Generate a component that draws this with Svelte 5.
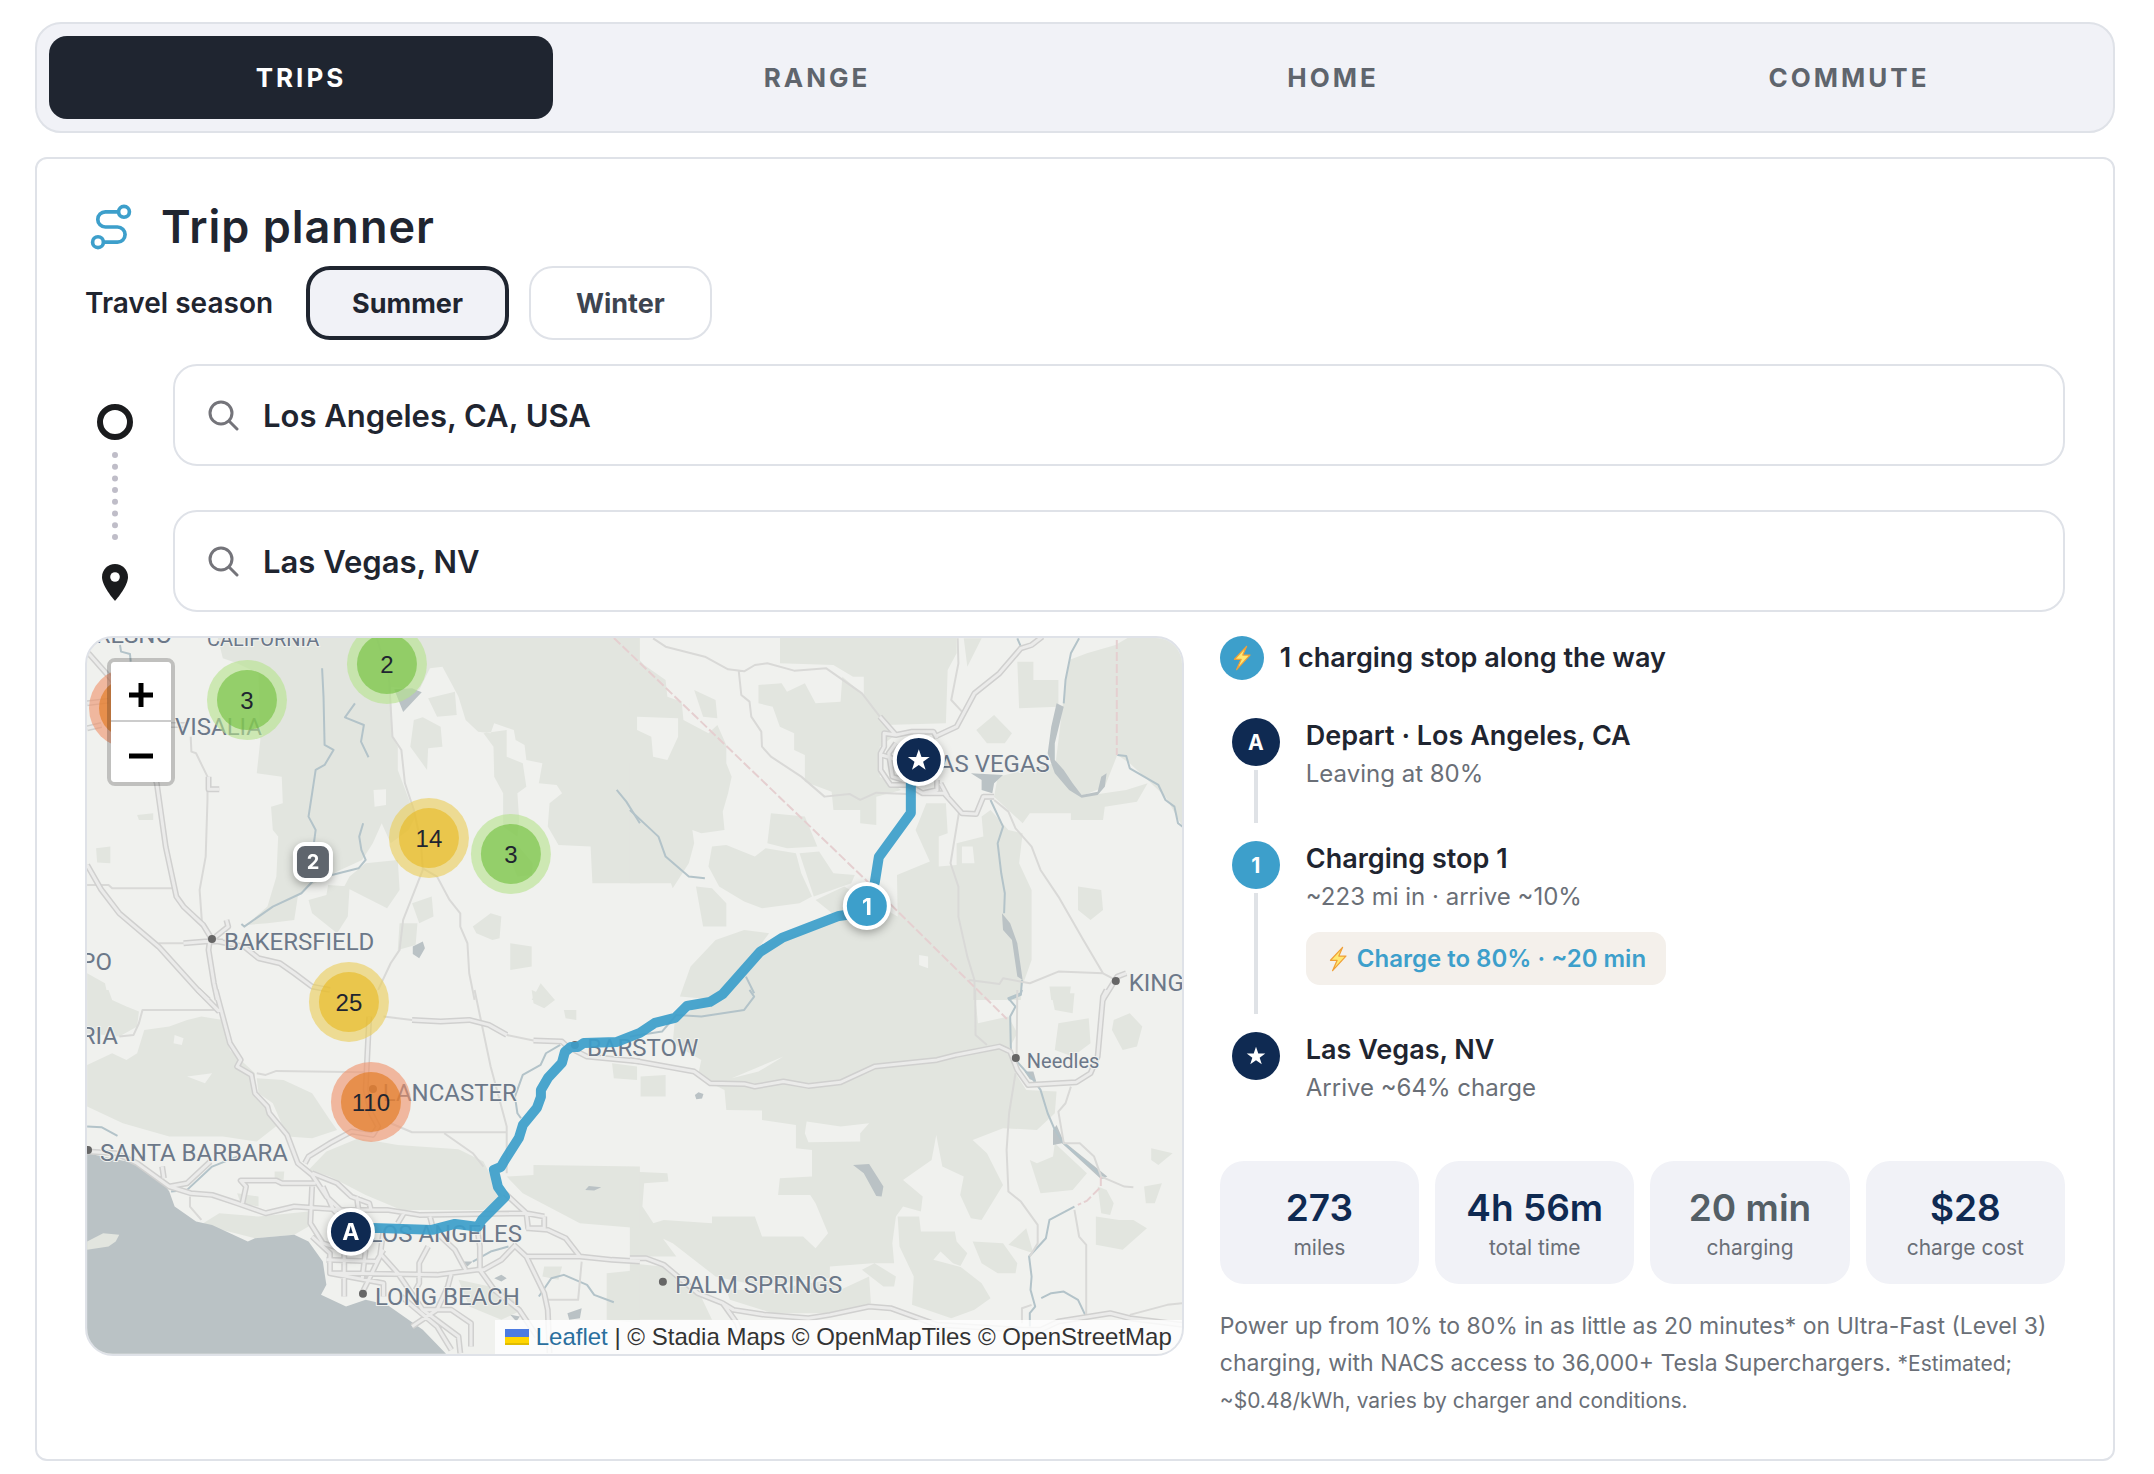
<script>
  const tabs = ['TRIPS', 'RANGE', 'HOME', 'COMMUTE'];
  const seasons = ['Summer', 'Winter'];
  let tab = $state('TRIPS');
  let season = $state('Summer');
  let origin = $state('Los Angeles, CA, USA');
  let destination = $state('Las Vegas, NV');

  const stats = [
    { value: '273', label: 'miles' },
    { value: '4h 56m', label: 'total time' },
    { value: '20 min', label: 'charging', muted: true },
    { value: '$28', label: 'charge cost' }
  ];

  const clusters = [
    { x: 129, y: 708, n: '', size: 'large' },
    { x: 247, y: 700, n: '3', size: 'small' },
    { x: 387, y: 664, n: '2', size: 'small' },
    { x: 429, y: 838, n: '14', size: 'medium' },
    { x: 511, y: 854, n: '3', size: 'small' },
    { x: 349, y: 1002, n: '25', size: 'medium' },
    { x: 371, y: 1102, n: '110', size: 'large' }
  ];

  const cities = [
    { name: 'VISALIA', x: 175, y: 735 },
    { name: 'BAKERSFIELD', x: 224, y: 950, dot: [212, 939] },
    { name: 'LAS VEGAS', x: 1050, y: 772, end: true },
    { name: 'KING', x: 1129, y: 991, dot: [1116, 981] },
    { name: 'PO', x: 112, y: 970, end: true },
    { name: 'RIA', x: 118, y: 1044, end: true },
    { name: 'SANTA BARBARA', x: 100, y: 1161, dot: [88, 1150] },
    { name: 'LANCASTER', x: 517, y: 1101, end: true, dot: [373, 1089] },
    { name: 'LOS ANGELES', x: 522, y: 1242, end: true },
    { name: 'LONG BEACH', x: 375, y: 1305, dot: [363, 1294] },
    { name: 'BARSTOW', x: 587, y: 1056, dot: [575, 1045] },
    { name: 'PALM SPRINGS', x: 675, y: 1293, dot: [663, 1282] },
    { name: 'FRESNO', x: 172, y: 643, end: true },
    { name: 'CALIFORNIA', x: 207, y: 646, small: true },
    { name: 'Needles', x: 1027, y: 1068, small: true, dot: [1016, 1058] }
  ];

  // Each quadrant keeps its own local grid; strokes ignore the scale.
  const tiles = [
    {
      at: 'translate(80 630) scale(.357143 .333333)',
      park: 'M385 20L400 85 440 100 500 130 505 330 495 430 565 440 568 520 535 530 540 600 555 620 550 740 525 830 465 885 525 880 600 870 610 800 640 770 720 725 790 690 820 640 845 580 870 640 920 600 940 560 925 520 890 420 890 350 875 320 870 170 950 180 980 115 1015 110 1040 160 1060 200 1080 270 1115 305 1150 310 1160 280 1215 300 1220 330 1245 345 1250 390 1295 400 1285 460 1335 465 1350 490 1315 520 1310 590 1340 645 1430 650 1435 760 1568 760 1568 20Z M975 205L1050 185 1055 255 1000 260Z M935 270L960 262 1010 290 1015 350 975 355 972 420 925 350Z M1130 310L1195 300 1195 380 1240 400 1250 470 1225 490 1230 570 1225 620 1185 590 1185 490 1160 440 1158 350Z M1190 650L1225 645 1268 700 1265 735 1225 740Z M45 655L85 650 85 700 48 698Z M640 810L690 795 695 765 755 770 750 860 720 910 650 850Z M755 740L800 700 890 690 895 780 860 835 740 770Z M930 820L985 800 990 860 950 880Z M1100 890L1150 850 1180 860 1175 925 1155 930 1110 910Z M895 880L945 880 940 945 890 960Z M1205 940L1265 950 1265 1010 1205 1020Z M1290 1060L1330 1110 1265 1110Z M160 555L205 550 205 570 165 570Z M20 1030L70 1060 80 1110 20 1110Z',
      gap: 'M822 480L857 478 857 525 825 530Z M640 640L690 660 690 700 650 720Z',
      water: 'M880 178L930 175 957 187 905 246Z M932 950L960 935 966 955 950 985 932 972Z',
      thin: 'M830 20L865 140 875 320 900 360 910 460 935 540 955 640 960 720 905 870 895 960 870 1000 835 1080M960 715L1000 740 1035 810 1065 850 1065 890 1085 940 1090 1030 1105 1110M310 320L312 365 325 370 357 440 357 510 352 680 335 780 342 885M20 765L80 765 90 775 265 775M220 940L290 940',
      road: 'M20 65L90 150 160 290 215 460 240 650 270 800 290 830 345 885 365 920 360 960 375 1060 385 1110M20 705L60 780 110 850 220 950 330 1080 360 1110M290 940L350 935 400 935M380 920L415 890 410 870M365 930L460 950 500 985 560 1000 600 1030 650 1070 700 1080M20 295L60 285M255 285L300 285M360 440L360 478 390 478M20 220L80 212',
      river: 'M678 115L682 200 685 345 710 360 685 405 660 420 650 490 640 560 660 600 655 640M770 220L742 262 795 285 787 335 808 382M793 580L782 620 788 660 800 690 780 715 705 735M655 750L620 790 540 830 500 860 460 890 452 882M112 45L115 65 140 72 142 95M1503 480L1530 515 1568 580'
    },
    {
      at: 'translate(630 630) scale(.357143 .333333)',
      park: 'M0 20L0 60 40 105 100 150 105 200 145 215 150 270 220 310 245 285 270 345 270 400 285 440 275 490 260 545 265 600 200 610 175 600 180 640 165 700 120 775 115 760 0 760Z M420 20L915 20 915 70 890 120 885 280 715 285 655 220 655 140 625 140 570 105 420 100Z M180 180L240 210 245 265 205 260Z M360 165L425 160 440 185 490 160 520 220 590 215 595 140 650 190 690 250 750 310 700 350 700 440 760 480 690 500 690 585 645 580 645 540 570 540 565 485 490 455 490 375 460 360 460 310 420 290 400 230 360 220Z M395 550L490 560 525 650 440 655 385 640Z M230 650L270 645 350 680 380 655 465 670 480 730 510 800 475 820 370 835 320 815 250 770 220 710Z M475 670L530 665 570 730 630 735 620 760 515 800Z M185 770L230 775 270 820 270 890 205 890Z M520 810L600 770 750 860 748 735 840 695 800 600 830 520 885 520 890 610 865 620 865 710 915 705 915 640 990 620 985 560 1010 540 1060 600 1100 610 1090 700 1125 780 1125 990 1095 1080 1095 1110 240 1110 330 1010 380 940 590 870Z M140 1100L170 1010 240 930 320 900 390 910 250 1110Z M1230 90L1280 70 1360 45 1400 20 1548 20 1548 590 1500 500 1400 400 1365 375 1330 470 1260 500 1190 420 1215 200Z M1260 500L1390 480 1450 460 1420 515 1330 530 1325 570 1235 570 1235 550 1120 550 1100 580 1050 530 1020 500 1030 440 1190 400Z M1085 95L1130 95 1130 150 1200 150 1200 230 1090 235Z M970 300L1020 255 1070 310 1050 340 1000 340Z M935 25L985 25 945 110Z M1255 770L1320 780 1325 840 1290 870 1255 840Z M1175 1070L1235 1070 1230 1110 1180 1110Z M1060 1050L1100 1060 1090 1110 1050 1110Z',
      gap: 'M20 260L135 265 135 320 105 390 65 380 60 320 20 300Z M60 20L420 20 420 100 300 120 250 130Z M810 975L835 980 835 1015 810 1005Z M930 650L960 650 965 700 930 700Z',
      water: 'M1195 220L1215 230 1190 340 1190 390 1215 420 1240 460 1265 495 1310 485 1320 440 1335 430 1330 470 1310 495 1265 503 1230 480 1190 430 1170 370 1180 290Z M955 430L1045 435 1020 460 1015 490 985 480 985 450Z M1042 850L1065 880 1085 940 1100 1050 1085 1040 1070 930 1045 900Z',
      thin: 'M65 25L100 50 210 80 275 118 320 124 350 105 385 100 460 122 550 115 650 190 700 260M305 124L312 195 335 215 340 260 368 305 370 350 395 380 480 440 545 500 615 492 645 510 690 488 775 492M918 25L920 100 900 210 930 245M922 545L898 700 920 770 920 860 945 980 965 1050 965 1110M1020 510L1060 545 1080 595 1125 650 1150 720 1200 800 1270 930 1325 1030 1360 1050M950 1050L1035 1062 1045 1045 1120 1060 1200 1025 1325 1030',
      road: 'M855 320L915 290 965 190 1035 130 1095 55 1125 45 1155 20M700 260L745 315 790 305 850 305 860 325M745 315L712 310 712 350 702 370 702 420 730 465 780 465 820 490 880 490 930 550 970 552 990 500 1020 500M705 375L750 390M870 460L890 500M1390 1030L1365 1040 1330 1100 1325 1110M745 340L725 370 735 440 765 450M820 490L860 480 860 450',
      river: 'M1258 25L1235 70 1220 150 1215 220M1365 375L1390 378 1400 415 1480 465 1500 510 1525 530 1535 580 1548 590M1010 510L1045 590 1030 640 1040 730 1050 790 1048 850M1098 1050L1095 1095 1060 1110M0 540L50 590 80 620 100 680 165 740 210 745M1085 25L1095 50M325 1040L348 1090'
    },
    {
      at: 'translate(630 990) scale(.357143 .333333)',
      park: 'M245 0L965 0 975 100 1060 80 1085 130 1060 180 1080 250 1110 300 1195 305 1190 370 1140 420 1045 415 960 450 1000 490 1045 585 985 690 955 685 925 615 935 560 875 530 858 435 845 510 765 570 820 620 815 665 765 650 745 680 735 760 740 820 680 820 560 830 560 865 490 870 370 890 240 860 120 760 80 740 65 700 95 690 230 700 230 680 350 680 370 740 485 740 520 775 555 730 520 640 505 615 415 615 420 565 510 560 510 480 465 475 465 405 370 390 370 362 270 360 265 300 190 260 200 210 120 160 125 100Z M0 545L105 550 108 575 40 580 35 650 60 690 95 750 130 800 0 800Z M0 820L90 830 190 900 230 990 0 990Z M270 900L400 900 560 870 590 900 670 860 675 940 560 970 400 970 280 930Z M750 680L810 680 815 725 910 725 915 755 945 790 925 830 985 880 1010 925 965 960 900 985 790 945 795 860 755 770Z M960 755L1045 760 1085 820 1080 850 1030 850 985 820Z M1060 765L1110 715 1130 790Z M1120 510L1140 520 1185 500 1190 460 1280 550 1240 600 1150 610Z M1305 680L1370 690 1410 690 1448 715 1380 780 1305 765Z M1310 590L1335 600 1355 640 1345 675 1320 670Z M1440 590L1490 580 1470 640 1445 640Z M1460 475L1520 490 1480 525 1460 510Z M1355 90L1400 70 1435 110 1420 170 1380 180 1350 120Z M1200 100L1285 85 1290 160 1240 200 1190 180Z M1180 10L1245 10 1240 70 1190 60Z M30 260L100 255 100 320 30 320Z M650 840L685 820 745 860 740 890 710 890Z',
      gap: 'M495 395L590 410 670 400 645 430 645 455 500 457 490 430Z M285 265L430 200 360 245Z M870 785L905 820 955 840 850 810Z',
      water: 'M625 525L670 522 710 590 705 620 690 618 655 550Z M182 315L192 307 206 312 202 326 186 328Z M1185 420L1195 405 1215 455 1337 560 1320 568 1210 460 1185 465Z M1105 245L1130 245 1138 275 1120 268Z',
      thin: 'M967 0L968 135 1000 165M1080 250L1062 370 1055 480 1060 605 1095 635 1142 705 1142 760 1120 800M1085 0L1083 200M1235 290L1220 340 1200 365 1212 440 1215 460 1260 460 1300 500 1320 560 1385 590 1410 592M1245 660L1258 740 1278 765 1278 975M1400 975L1505 945 1548 940M1098 1000L1098 955 1125 945',
      road: 'M0 210L180 245 225 280 320 282 350 290 430 275 500 288 590 277 685 230 860 210 915 195 1035 170 1065 185 1085 240 1115 285 1250 277 1290 250 1310 200 1325 20 1335 0M0 805L45 805 95 825 190 910 260 940 290 960 380 975 500 985 560 975 670 950 730 955 860 1005 1100 1020 1150 1020 1200 995 1345 970 1400 985 1548 1005M260 940L300 1000 325 1080',
      river: 'M1098 0L1095 10 1060 25 1080 50 1065 80 1067 180 1080 210 1130 270 1150 300 1170 370 1190 420 1215 460 1270 510 1330 565M1245 650L1175 690 1165 745 1118 800 1125 860 1122 900 1135 950 1120 970 1120 1010M1152 925L1180 910 1215 905 1255 930 1275 975M0 140L90 125 130 75 200 80 320 60 348 20 335 0'
    },
    {
      at: 'translate(80 990) scale(.357143 .333333)',
      park: 'M20 0L80 0 90 30 130 50 165 65 160 110 110 140 20 130Z M20 225L90 190 130 210 160 190 180 120 250 110 300 90 340 80 400 90 420 180 490 250 490 310 560 400 495 455 400 440 250 440 120 400 20 350Z M495 265L570 270 650 310 700 390 720 420 650 445 580 440 540 340 500 310Z M640 540L690 485 780 445 890 465 1060 478 1130 515 1160 580 1185 620 1130 660 900 660 800 615 700 560Z M345 700L390 670 500 680 640 665 640 710 600 735 490 745 380 715Z M1195 560L1270 555 1270 525 1568 530 1568 715 1400 700 1240 610Z M1490 220L1560 230 1560 270 1495 265Z M1265 0L1330 30 1300 55 1270 40Z M1355 60L1390 60 1390 90 1360 85Z M1475 850L1568 840 1568 1000 1475 990Z M1060 870L1190 900 1240 960 1180 990 1090 950Z M1300 830L1350 830 1340 870 1295 860Z M440 610L500 620 500 650 450 640Z M545 545L572 545 570 570 545 565Z',
      gap: 'M300 260L370 250 350 280Z M265 135L290 145 285 165 262 160Z',
      water: 'M20 490L155 520 230 575 250 605 265 650 325 695 370 705 470 755 490 745 600 735 640 755 680 815 690 885 675 915 745 950 800 930 860 945 960 1020 1025 1092 20 1092Z M1070 815L1100 815 1085 830Z M1415 600L1425 588 1460 592 1440 602Z M1160 865L1180 855 1195 865 1180 875Z M1365 970L1405 955 1400 985 1370 990Z M1205 975L1232 980 1222 995Z',
      island: 'M20 755L65 730 110 735 100 755 80 770 20 780Z',
      thin: 'M495 250L520 255 550 243 800 247M1105 0L1150 230 1195 410 1195 550M870 400L930 427 1195 427M1020 430L1100 490 1130 530M375 60L175 60 165 100 150 135 110 140M1405 815L1395 930 1310 930M308 620L308 650 340 690M1195 135L1270 152M850 80L930 90',
      road: 'M330 0L390 65M380 0L420 160 450 210 440 230 480 255 490 310 525 350 530 370 580 435 610 520 650 555 690 620 730 660M20 485L100 490 160 520 250 590 310 610 370 615 440 640 520 670 600 650 740 660 860 660 950 675 1250 670 1300 680M250 590L300 580 365 515M230 530L235 565M455 640L465 590 450 572 550 572 565 580 640 580 660 580M650 550L720 580 760 620 810 640 815 660M775 620L780 660M630 520L640 500 700 460 760 425 820 435 835 410 815 370 800 300 810 80M650 590L645 700 680 760 740 780 740 920M680 590L710 660 800 760M650 740L700 790 700 850 740 850 1000 855 1110 840 1130 840 1180 810 1220 765M690 810L830 815 850 780M850 720L840 800 790 910M800 780L790 870M840 790L890 850 960 960 1060 1040 1065 1090M700 850L850 880 850 920M975 770L950 820 950 880 940 900M910 665L890 700M980 680L990 720 1050 780 1080 840M1110 700L1120 770 1120 840 1160 900 1230 960 1280 1040M1040 850L1030 890 1000 960 930 1010M900 920L1000 1010 1040 1080M960 960L1040 960 1095 1000 1095 1070M1190 610L1250 670 1255 715 1310 720 1360 745 1400 800 1490 810 1568 815M1300 680L1300 715 1250 715M1215 765L1250 800 1400 800M1250 800L1300 910 1310 960 1315 1090M930 90L1010 95 1090 90 1145 105 1195 135M1270 152L1350 155 1365 170 1420 200 1568 215',
      river: 'M20 410L60 412 105 438M255 605L300 600 370 530 440 500M1345 165L1305 190 1290 225 1240 255 1218 320 1225 370 1235 385M1200 770L1150 785 1100 815M1285 920L1320 865 1355 855 1420 885 1440 915 1495 937'
    }
  ];
</script>

{#snippet star()}
  <path d="M12 2l2.5 7.2h7.6l-6.1 4.6 2.3 7.3L12 16.700l-6.300 4.400 2.300-7.300L1.900 9.200h7.600z" fill="#fff" />
{/snippet}

{#snippet bolt()}
  <svg class="bolt" viewBox="0 0 24 32" aria-hidden="true">
    <path d="M17.500 2L3 17.500H11L5.500 30 21.500 12.500H13Z" fill="#ffe873" stroke="#f0a038" stroke-width="1.500" stroke-linejoin="round" />
  </svg>
{/snippet}

{#snippet searchIcon()}
  <svg class="search" viewBox="0 0 32 32" aria-hidden="true">
    <circle cx="14" cy="14" r="11" fill="none" stroke="#74747a" stroke-width="3" />
    <path d="M22 22L30 30" stroke="#74747a" stroke-width="3" stroke-linecap="round" />
  </svg>
{/snippet}

<div class="page">
  <nav class="tabs">
    {#each tabs as t}
      <button class:active={tab === t} onclick={() => (tab = t)}>{t}</button>
    {/each}
  </nav>

  <main class="card">
    <header class="title">
      <svg class="route-icon" viewBox="0 0 24 24" fill="none" stroke="#3d9fcb" stroke-width="1.700" aria-hidden="true">
        <circle cx="6" cy="19" r="2.500" />
        <circle cx="18" cy="5" r="2.500" />
        <path d="M8.500 19H15a3.500 3.500 0 0 0 0-7H9.400a3.500 3.500 0 0 1 0-7h6.100" />
      </svg>
      <h1>Trip planner</h1>
    </header>

    <div class="season" role="group" aria-labelledby="season-label">
      <span id="season-label">Travel season</span>
      <div class="season-options">
        {#each seasons as s}
          <button class:active={season === s} aria-pressed={season === s} onclick={() => (season = s)}>{s}</button>
        {/each}
      </div>
    </div>

    <div class="places">
      <svg class="rail" viewBox="0 0 60 200" aria-hidden="true">
        <circle cx="30" cy="20" r="15" fill="none" stroke="#1a1b1d" stroke-width="6" />
        <path d="M30 53V136" stroke="#bfbdc8" stroke-width="6" stroke-linecap="round" stroke-dasharray="0 11.700" />
        <path d="M30 162c-7.200 0-13 5.800-13 13 0 9.500 13 24 13 24s13-14.500 13-24c0-7.200-5.800-13-13-13z" fill="#1a1b1d" />
        <circle cx="30" cy="175" r="4.800" fill="#fff" />
      </svg>
      <div class="fields">
        <label class="field">
          {@render searchIcon()}
          <input type="text" aria-label="Start" bind:value={origin} />
        </label>
        <label class="field">
          {@render searchIcon()}
          <input type="text" aria-label="Destination" bind:value={destination} />
        </label>
      </div>
    </div>

    <div class="result">
      <section class="map" aria-label="Route map">
        <svg class="canvas" viewBox="87 638 1095 716" preserveAspectRatio="xMidYMid slice">
          {#each tiles as t}
            <g transform={t.at}>
              <path class="park" d={t.park} />
              <path class="gap" d={t.gap} />
            </g>
          {/each}
          {#each tiles as t}
            <g transform={t.at}>
              <path class="water" d={t.water} />
              {#if t.island}<path class="park" d={t.island} />{/if}
              <path class="river" d={t.river} />
              <path class="thin" d={t.thin} />
            </g>
          {/each}
          <path class="border" d="M614 638L868 882 1007 1019M1117 640V755M1101 1177V1187L1087 1201 1078 1205" />
          {#each tiles as t}
            <g transform={t.at}><path class="road-case" d={t.road} /></g>
          {/each}
          {#each tiles as t}
            <g transform={t.at}><path class="road-core" d={t.road} /></g>
          {/each}

          {#each cities as c}
            {#if c.dot}<circle cx={c.dot[0]} cy={c.dot[1]} r="4" fill="#666" />{/if}
            <text class="city" class:small={c.small} class:end={c.end} x={c.x} y={c.y}>{c.name}</text>
          {/each}

          <path
            class="route"
            d="M351 1228L373 1228 432 1230 455 1224 478 1227 482 1220 505 1197 498 1187 494 1170 501 1167 505 1160 519 1138 523 1125 537 1108 541 1097 541 1090 548 1078 562 1063 565 1052 571 1047 578 1047 584 1043 617 1042 640 1033 655 1023 675 1018 687 1006 710 1002 723 994 760 952 782 938 839 916 867 912 875 882 879 857 911 813 911 783 918 760"
          />

          {#each clusters as c}
            <g class="cluster {c.size}">
              <circle class="halo" cx={c.x} cy={c.y} r="40" />
              <circle class="core" cx={c.x} cy={c.y} r="30" />
              <text x={c.x} y={c.y + 9}>{c.n}</text>
            </g>
          {/each}

          <g class="pin">
            <rect x="295" y="844" width="36" height="36" rx="10" fill="#5f656d" />
            <text x="313" y="869" class="pin-small">2</text>
          </g>
          <g class="pin">
            <circle cx="351" cy="1232" r="22" fill="#0f2a52" />
            <text x="351" y="1240">A</text>
          </g>
          <g class="pin">
            <circle cx="867" cy="906" r="22" fill="#3d9fcb" />
            <text x="867" y="915">1</text>
          </g>
          <g class="pin">
            <circle cx="919" cy="760" r="24" fill="#0f2a52" />
          </g>
          <g transform="translate(906 747) scale(1.080)">{@render star()}</g>
        </svg>

        <div class="zoom">
          <button aria-label="Zoom in">
            <svg viewBox="0 0 26 26" aria-hidden="true"><path d="M13 1V25M1 13H25" stroke="#000" stroke-width="5" /></svg>
          </button>
          <button aria-label="Zoom out">
            <svg viewBox="0 0 26 26" aria-hidden="true"><path d="M1 13H25" stroke="#000" stroke-width="5" /></svg>
          </button>
        </div>

        <div class="attribution">
          <a href="#leaflet">
            <svg viewBox="0 0 24 16" aria-hidden="true">
              <path d="M0 0h24v8H0z" fill="#4c7be1" />
              <path d="M0 8h24v6H0z" fill="#ffd500" />
              <path d="M0 14h24v2H0z" fill="#e0bc00" />
            </svg>
            Leaflet</a>
          | © Stadia Maps © OpenMapTiles © OpenStreetMap
        </div>
      </section>

      <section class="plan">
        <h2><span class="round">{@render bolt()}</span>1 charging stop along the way</h2>

        <ol class="stops">
          <li>
            <div class="track"><span class="badge">A</span></div>
            <div class="info">
              <h3>Depart · Los Angeles, CA</h3>
              <p>Leaving at 80%</p>
            </div>
          </li>
          <li>
            <div class="track"><span class="badge blue">1</span></div>
            <div class="info">
              <h3>Charging stop 1</h3>
              <p>~223 mi in · arrive ~10%</p>
              <span class="chip">{@render bolt()}Charge to 80% · ~20 min</span>
            </div>
          </li>
          <li>
            <div class="track">
              <span class="badge"><svg class="star" viewBox="0 0 24 24" aria-hidden="true">{@render star()}</svg></span>
            </div>
            <div class="info">
              <h3>Las Vegas, NV</h3>
              <p>Arrive ~64% charge</p>
            </div>
          </li>
        </ol>

        <dl class="stats">
          {#each stats as s}
            <div>
              <dd class:muted={s.muted}>{s.value}</dd>
              <dt>{s.label}</dt>
            </div>
          {/each}
        </dl>

        <p class="note">
          Power up from 10% to 80% in as little as 20 minutes* on Ultra-Fast (Level 3) charging, with NACS access to
          36,000+ Tesla Superchargers. <small>*Estimated; ~$0.48/kWh, varies by charger and conditions.</small>
        </p>
      </section>
    </div>
  </main>
</div>

<style>
  :global(body) {
    background: #fff;
  }
  .page,
  .page * {
    box-sizing: border-box;
  }
  .page {
    padding: 22px 39px 12px 35px;
    display: flex;
    flex-direction: column;
    gap: 24px;
    font-family: Inter, 'Liberation Sans', sans-serif;
    color: #1f2530;
  }
  h1, h2, h3, p, ol, dl, dd {
    margin: 0;
    padding: 0;
  }
  button, input {
    font: inherit;
    color: inherit;
    border: 0;
    background: none;
    cursor: pointer;
  }

  .tabs {
    display: grid;
    grid-template-columns: repeat(4, 1fr);
    gap: 12px;
    padding: 12px;
    border: 2px solid #dfe2e8;
    border-radius: 26px;
    background: #f1f2f7;
  }
  .tabs button {
    height: 83px;
    border-radius: 18px;
    font-size: 26px;
    font-weight: 700;
    letter-spacing: 3px;
    color: #5f656d;
  }
  .tabs button.active {
    background: #1f2530;
    color: #fff;
  }

  .card {
    padding: 40px 48px;
    border: 2px solid #dfe2e8;
    border-radius: 12px;
  }
  .title {
    display: flex;
    align-items: center;
    gap: 24px;
    height: 56px;
  }
  .route-icon {
    width: 52px;
    height: 52px;
  }
  h1 {
    font-size: 45px;
    line-height: 56px;
    font-weight: 600;
    letter-spacing: 1px;
  }

  .season {
    display: flex;
    align-items: center;
    gap: 33px;
    margin-top: 11px;
    font-size: 28px;
    font-weight: 600;
  }
  .season-options {
    display: flex;
    gap: 20px;
  }
  .season button {
    height: 74px;
    padding: 0 45px;
    border: 2px solid #dfe2e8;
    border-radius: 24px;
    font-size: 27px;
    font-weight: 700;
    color: #3d4450;
  }
  .season button.active {
    padding: 0 42px;
    border: 4px solid #1f2530;
    background: #f1f2f7;
    color: #1f2530;
  }

  .places {
    display: flex;
    gap: 28px;
    margin-top: 24px;
  }
  .rail {
    flex: none;
    width: 60px;
    height: 200px;
    margin-top: 38px;
  }
  .fields {
    flex: 1;
    display: flex;
    flex-direction: column;
    gap: 44px;
  }
  .field {
    display: flex;
    align-items: center;
    gap: 24px;
    height: 102px;
    padding: 0 32px;
    border: 2px solid #dfe2e8;
    border-radius: 24px;
  }
  .search {
    flex: none;
    width: 32px;
    height: 32px;
  }
  .field input {
    flex: 1;
    min-width: 0;
    padding: 0;
    font-size: 31px;
    font-weight: 600;
    outline: none;
    cursor: text;
  }

  .result {
    display: grid;
    grid-template-columns: 13fr 10fr;
    gap: 36px;
    align-items: start;
    margin-top: 24px;
  }
  .map {
    position: relative;
    aspect-ratio: 1099 / 720;
    border: 2px solid #dfe2e8;
    border-radius: 28px;
    overflow: hidden;
    background: #f0f1ee;
  }
  .canvas {
    display: block;
    width: 100%;
    height: 100%;
  }
  .canvas path {
    vector-effect: non-scaling-stroke;
    stroke-linejoin: round;
  }
  .park { fill: #e2e5df; }
  .gap { fill: #f0f1ee; }
  .water { fill: #bac2c5; }
  .river { fill: none; stroke: #b3c3c9; stroke-width: 2px; }
  .thin { fill: none; stroke: #d9d9d7; stroke-width: 2px; }
  .road-case { fill: none; stroke: #d0d0cf; stroke-width: 6px; }
  .road-core { fill: none; stroke: #ebebea; stroke-width: 3px; }
  .border { fill: none; stroke: #e5cfd0; stroke-width: 2px; stroke-dasharray: 9 3; }
  .route { fill: none; stroke: #3d9fcb; stroke-width: 10px; stroke-linecap: round; opacity: 0.92; }
  .city {
    font-family: Roboto, sans-serif;
    font-size: 24px;
    fill: #6c7889;
    stroke: #f0f1ee;
    stroke-width: 2px;
    paint-order: stroke;
  }
  .city.small { font-size: 20px; }
  .city.end { text-anchor: end; }
  .cluster text {
    font-family: 'Liberation Sans', sans-serif;
    font-size: 24px;
    text-anchor: middle;
    fill: #1f2530;
  }
  .small .halo { fill: rgba(181, 226, 140, 0.6); }
  .small .core { fill: rgba(110, 190, 57, 0.6); }
  .medium .halo { fill: rgba(235, 205, 87, 0.6); }
  .medium .core { fill: rgba(232, 184, 28, 0.6); }
  .large .halo { fill: rgba(240, 145, 105, 0.6); }
  .large .core { fill: rgba(226, 122, 32, 0.65); }
  .pin circle,
  .pin rect {
    stroke: #fff;
    stroke-width: 4px;
  }
  .pin { filter: drop-shadow(0 3px 4px rgba(0, 0, 0, 0.3)); }
  .pin text {
    font-size: 23px;
    font-weight: 700;
    text-anchor: middle;
    fill: #fff;
  }
  .pin .pin-small { font-size: 20px; }

  .zoom {
    position: absolute;
    top: 20px;
    left: 20px;
    display: flex;
    flex-direction: column;
    border: 4px solid rgba(0, 0, 0, 0.2);
    border-radius: 8px;
    background-clip: padding-box;
  }
  .zoom button {
    display: grid;
    place-items: center;
    width: 60px;
    height: 60px;
    padding: 8px 0 0;
    background: #fff;
  }
  .zoom button:first-child {
    border-bottom: 2px solid #ccc;
    border-radius: 4px 4px 0 0;
  }
  .zoom button:last-child { border-radius: 0 0 4px 4px; }
  .zoom svg { width: 26px; height: 26px; }
  .attribution {
    position: absolute;
    right: 0;
    bottom: 0;
    padding: 0 10px;
    background: rgba(255, 255, 255, 0.8);
    font-family: 'Liberation Sans', sans-serif;
    font-size: 24px;
    line-height: 34px;
    white-space: nowrap;
    color: #333;
  }
  .attribution a {
    color: #2a6f9e;
    text-decoration: none;
  }
  .attribution svg { width: 24px; height: 16px; }

  h2 {
    display: flex;
    align-items: center;
    gap: 16px;
    font-size: 27px;
    line-height: 44px;
    font-weight: 600;
  }
  .round {
    display: grid;
    place-items: center;
    width: 44px;
    height: 44px;
    border-radius: 50%;
    background: #3d9fcb;
  }
  .bolt {
    width: 20px;
    height: 28px;
  }
  .stops {
    list-style: none;
    margin-top: 38px;
    padding: 0 12px;
  }
  .stops li {
    display: flex;
    gap: 26px;
  }
  .track {
    flex: none;
    display: flex;
    flex-direction: column;
    align-items: center;
    gap: 4px;
    width: 48px;
    padding-bottom: 18px;
  }
  .stops li:not(:last-child) .track::after {
    content: '';
    flex: 1;
    width: 4px;
    background: #dfe2e6;
  }
  .badge {
    display: grid;
    place-items: center;
    width: 48px;
    height: 48px;
    border-radius: 50%;
    background: #0f2a52;
    color: #fff;
    font-size: 21px;
    font-weight: 700;
  }
  .badge.blue { background: #3d9fcb; }
  .star { width: 22px; height: 22px; }
  .info { padding-bottom: 47px; }
  .stops li:last-child .info { padding-bottom: 2px; }
  h3 {
    font-size: 27px;
    line-height: 36px;
    font-weight: 600;
  }
  .info p {
    font-size: 24px;
    line-height: 40px;
    color: #6a6f77;
  }
  .chip {
    display: flex;
    align-items: center;
    gap: 9px;
    height: 53px;
    margin-top: 15px;
    padding: 0 20px 0 22px;
    border-radius: 14px;
    background: #f4f0eb;
    color: #3d9fcb;
    font-size: 24px;
    font-weight: 600;
  }

  .stats {
    display: grid;
    grid-template-columns: repeat(4, 1fr);
    gap: 16px;
    margin-top: 51px;
  }
  .stats div {
    display: flex;
    flex-direction: column;
    align-items: center;
    height: 123px;
    padding-top: 25px;
    border-radius: 24px;
    background: #f1f2f7;
  }
  dd {
    font-size: 37px;
    line-height: 44px;
    font-weight: 600;
    color: #0f2a52;
  }
  dd.muted { color: #545f66; }
  dt {
    font-size: 21px;
    line-height: 36px;
    color: #6a6f77;
  }
  .note {
    margin-top: 24px;
    font-size: 23px;
    line-height: 37px;
    color: #6a6f77;
  }
  .note small { font-size: 21px; }
</style>
